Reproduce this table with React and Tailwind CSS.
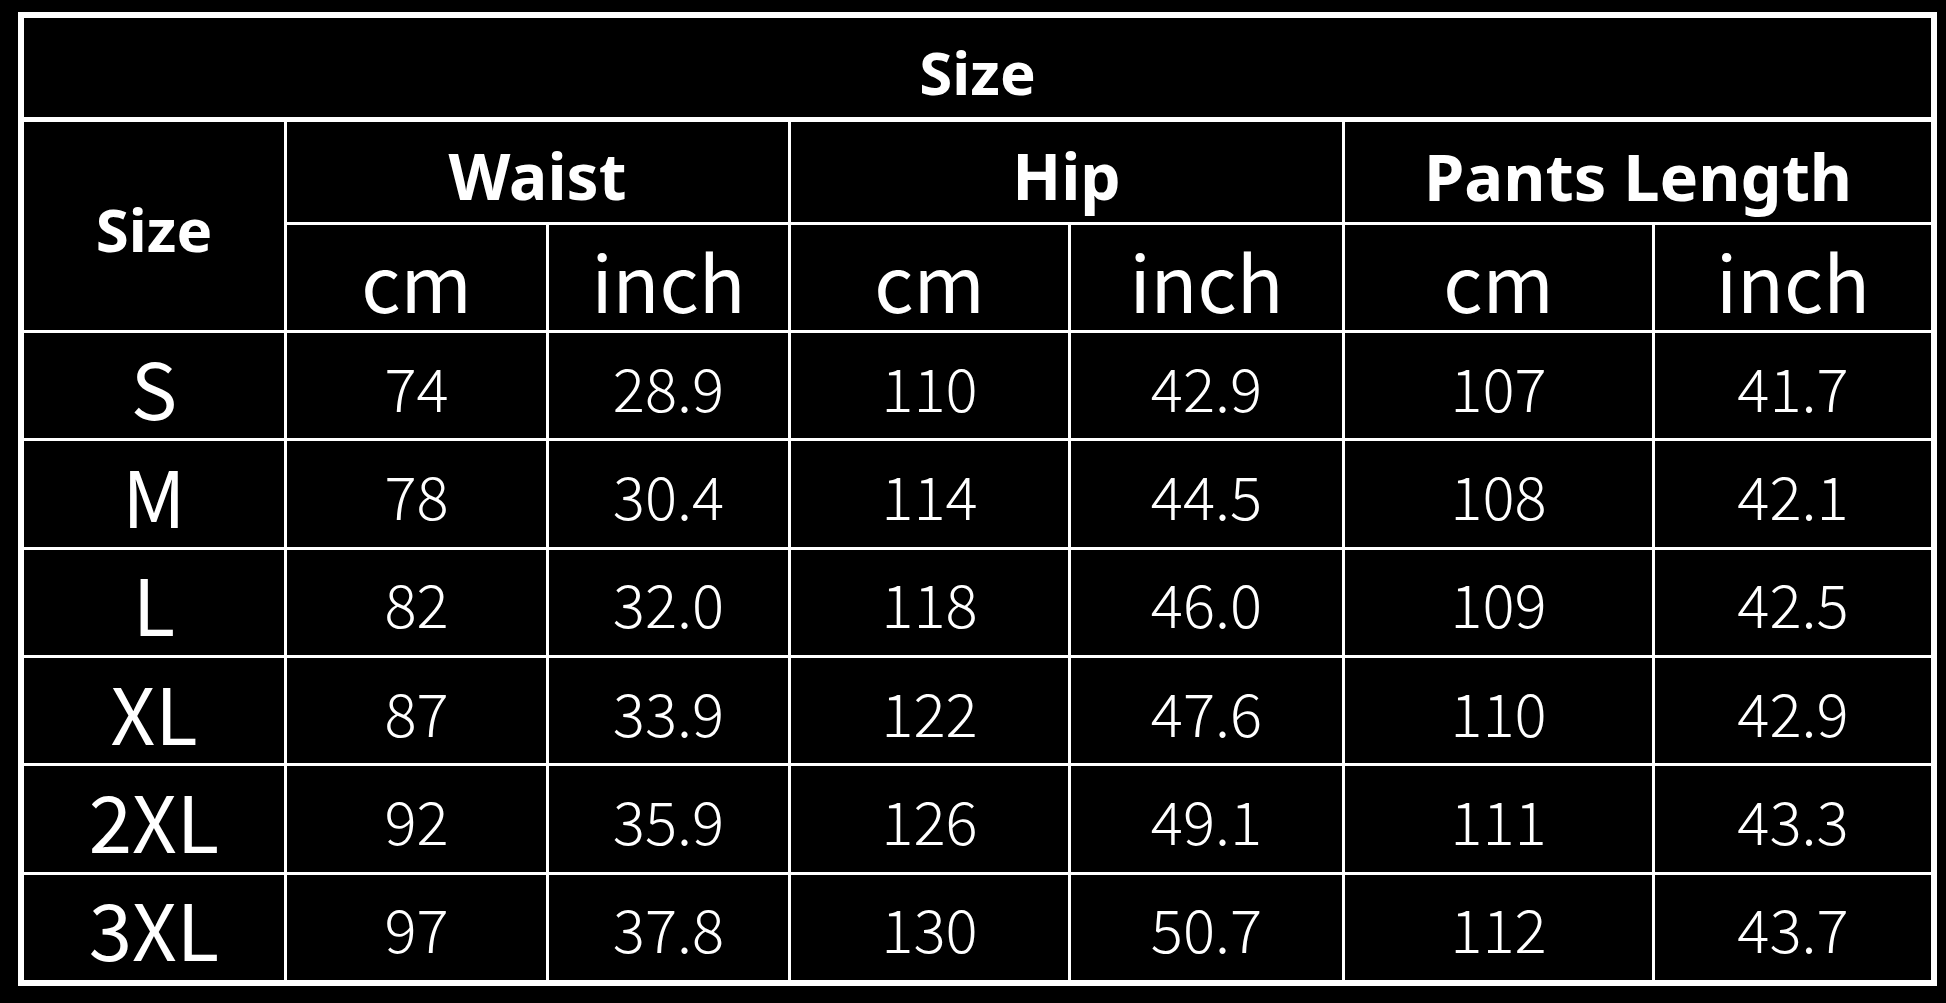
import React from "react";

const rows = [
  ["S", "74", "28.9", "110", "42.9", "107", "41.7"],
  ["M", "78", "30.4", "114", "44.5", "108", "42.1"],
  ["L", "82", "32.0", "118", "46.0", "109", "42.5"],
  ["XL", "87", "33.9", "122", "47.6", "110", "42.9"],
  ["2XL", "92", "35.9", "126", "49.1", "111", "43.3"],
  ["3XL", "97", "37.8", "130", "50.7", "112", "43.7"],
];

const head = "bg-black text-white flex items-center justify-center leading-none font-['Noto_Sans',sans-serif] font-bold";
const thin = "bg-black text-white flex items-center justify-center leading-none font-['Noto_Sans_CJK_SC','Noto_Sans',sans-serif]";

export default function App() {
  return (
    <div className="min-h-screen bg-black pt-[12px] pl-[18px]">
      <div className="w-[1919px] border-[6px] border-white bg-white flex flex-col gap-[5px]">
        <div className={`${head} h-[99px] text-[60px] pt-[8px]`}>Size</div>
        <div className="h-[858px] grid grid-cols-[260px_259px_239px_277px_271px_307px_276px] grid-rows-[100px_105px_repeat(6,minmax(0,1fr))] gap-[3px]">
          <div className={`${head} row-span-2 text-[60px] pt-[6px]`}>Size</div>
          <div className={`${head} col-span-2 text-[64px] pt-[8px]`}>Waist</div>
          <div className={`${head} col-span-2 text-[64px] pt-[8px]`}>Hip</div>
          <div className={`${head} col-span-2 text-[65px] pt-[8px]`}>Pants Length</div>
          {["cm", "inch", "cm", "inch", "cm", "inch"].map((u, i) => (
            <div key={i} className={`${thin} font-normal text-[77px] pt-[4px]`}>
              {u}
            </div>
          ))}
          {rows.map((r) =>
            r.map((v, j) => (
              <div
                key={r[0] + j}
                className={`${thin} ${j === 0 ? "font-normal text-[78px]" : "font-light text-[60px]"}`}
              >
                {v}
              </div>
            ))
          )}
        </div>
      </div>
    </div>
  );
}
